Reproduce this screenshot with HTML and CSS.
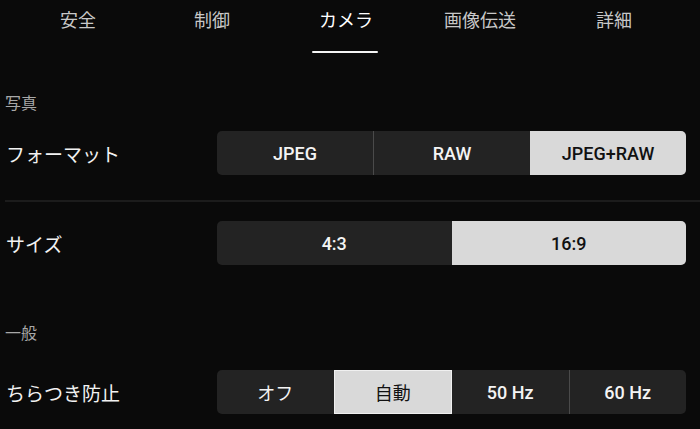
FILE: index.html
```html
<!DOCTYPE html>
<html>
<head>
    <link rel="stylesheet" href="styles.css">
    <title>カメラ設定</title>
</head>
<body>

    <nav class="tabs">
      <div class="tab">安全</div>
      <div class="tab">制御</div>
      <div class="tab active">カメラ</div>
      <div class="tab">画像伝送</div>
      <div class="tab">詳細</div>
    </nav>

    <div class="settings">
      <h2 class="section-title">写真</h2>
      <div class="row">
        <span class="label">フォーマット</span>
        <div class="segments">
          <span class="seg">JPEG</span>
          <span class="seg line">RAW</span>
          <span class="seg on">JPEG+RAW</span>
        </div>
      </div>

      <hr class="divider">

      <div class="row">
        <span class="label">サイズ</span>
        <div class="segments">
          <span class="seg">4:3</span>
          <span class="seg on">16:9</span>
        </div>
      </div>

      <h2 class="section-title general">一般</h2>
      <div class="row last">
        <span class="label">ちらつき防止</span>
        <div class="segments">
          <span class="seg jp">オフ</span>
          <span class="seg jp on boxed">自動</span>
          <span class="seg">50 Hz</span>
          <span class="seg line">60 Hz</span>
        </div>
      </div>
    </div>

</body>
</html>
```

FILE: styles.css
```css
/* general styling */
* {
  box-sizing: border-box;
  margin: 0;
  padding: 0;
}

html, body {
  height: 100%;
}

body {
  background-color: #0a0a0a;
  color: #f2f2f2;
  font-family: Roboto, "Noto Sans CJK JP", sans-serif;
  overflow: hidden;
}

/* tabs */
.tabs {
  display: flex;
  height: 54px;
  padding-left: 11px;
}

.tab {
  color: #c8c8c8;
  font-family: "Noto Sans CJK JP", sans-serif;
  font-size: 18px;
  line-height: 38px;
  position: relative;
  text-align: center;
  width: 134px;
}

.tab.active {
  color: #fff;
}

.tab.active::after {
  background-color: #f4f4f4;
  border-radius: 1px;
  content: "";
  height: 2px;
  left: 33px;
  position: absolute;
  top: 51px;
  width: 66px;
}

/* settings list */
.settings {
  padding: 0 14px 0 5px;
}

.section-title {
  color: #a8a8a8;
  font-family: "Noto Sans CJK JP", sans-serif;
  font-size: 16px;
  font-weight: normal;
  line-height: 20px;
  margin-top: 38px;
}

.section-title.general {
  margin-top: 57px;
}

.row {
  align-items: center;
  display: flex;
  justify-content: space-between;
  margin-top: 19px;
}

.row.last {
  margin-top: 28px;
}

.label {
  font-family: "Noto Sans CJK JP", sans-serif;
  font-size: 19px;
  padding-left: 1px;
}

.segments {
  background-color: #232323;
  border-radius: 5px;
  display: flex;
  height: 44px;
  overflow: hidden;
  width: 469px;
}

.seg {
  align-items: center;
  color: #f4f4f4;
  display: flex;
  flex: 1;
  font-size: 18px;
  font-weight: 500;
  justify-content: center;
}

.seg.jp {
  font-family: "Noto Sans CJK JP", sans-serif;
  font-weight: normal;
}

.seg.line {
  border-left: 1px solid #4a4a4a;
}

.seg.on {
  background-color: #d9d9d9;
  color: #111;
}

.seg.boxed {
  border: 1px solid #f0f0f0;
}

.divider {
  border: 0;
  border-top: 2px solid #1c1c1c;
  margin: 25px -14px 0 0;
}
```
